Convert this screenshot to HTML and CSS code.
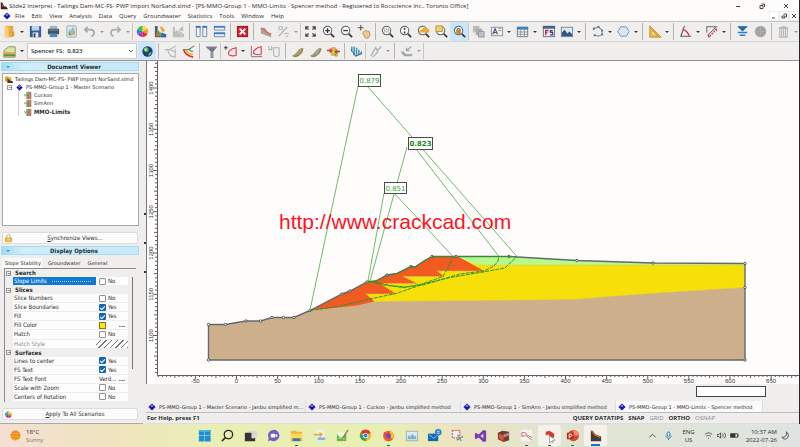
FILE: index.html
```html
<!DOCTYPE html>
<html lang="en">
<head>
<meta charset="utf-8">
<title>Slide2 Interpret</title>
<link rel="stylesheet" href="styles.css">
</head>
<body>
<svg class="sprite" aria-hidden="true">
  <defs>
    <symbol id="diamond" viewBox="0 0 10 10"><path d="M5 .5 9.5 5 5 9.5.5 5z" fill="#1b17b8"/><path d="M5 1.5 7 4 5 5 3 4z" fill="#7d86f5"/></symbol>
    <symbol id="app" viewBox="0 0 10 10"><path d="M1 0v9h9L8 6 5 5 3 1z" fill="#2c2522"/><path d="M2 1 4 5l4 2-5-1z" fill="#e2603a"/></symbol>
    <symbol id="folder" viewBox="0 0 16 16"><path d="M3 2h9v12H3z" fill="#e6ad45"/><path d="M3 2 7 4v11l-4-1z" fill="#f7cf79"/><path d="M11 8h2v5h-2z" fill="#d89a32"/></symbol>
    <symbol id="save" viewBox="0 0 16 16"><path d="M2 2h11l1 1v11H2z" fill="#3b5a94"/><path d="M4 2h8v5H4z" fill="#b9d3ee"/><path d="M5 9h6v5H5z" fill="#e9eef6"/><path d="M6 10h2v4H6z" fill="#2a3d66"/></symbol>
    <symbol id="print" viewBox="0 0 16 16"><path d="M4 2h8v4H4z" fill="#8fb9d9"/><rect x="2" y="5" width="12" height="6" rx="1" fill="#4a535c"/><path d="M4 10h8v4H4z" fill="#3f8fc5"/><path d="M3 6h10v1H3z" fill="#8a949c"/></symbol>
    <symbol id="copy" viewBox="0 0 16 16"><rect x="3" y="2" width="10" height="12" rx="1" fill="#dcecf2" stroke="#9ba7aa"/><path d="M5 12V6h3v-2h3v8z" fill="#8fc0cf"/><circle cx="10" cy="9" r="2" fill="#e0a060"/><path d="M5 8l3 4H5z" fill="#5ba352"/></symbol>
    <symbol id="undo" viewBox="0 0 16 16"><path d="M6 3 3 6l3 3M3 6h6c5 0 5 6 1 7" fill="none" stroke="#a4a6a6" stroke-width="1.7"/></symbol>
    <symbol id="redo" viewBox="0 0 16 16"><path d="M10 3l3 3-3 3M13 6H7c-5 0-5 6-1 7" fill="none" stroke="#aaacac" stroke-width="1.7"/></symbol>
    <symbol id="wheel" viewBox="0 0 16 16"><path d="M8 8V2a6 6 0 0 1 5.2 3z" fill="#f2e235"/><path d="M8 8l5.2-3a6 6 0 0 1 0 6z" fill="#f39a21"/><path d="M8 8l5.2 3A6 6 0 0 1 8 14z" fill="#e3262b"/><path d="M8 8v6a6 6 0 0 1-5.2-3z" fill="#b32ec4"/><path d="M8 8l-5.2 3a6 6 0 0 1 0-6z" fill="#2a7de8"/><path d="M8 8 2.800 5A6 6 0 0 1 8 2z" fill="#36c451"/></symbol>
    <symbol id="contour" viewBox="0 0 16 16"><path d="M2 2h3v8l9 1v3H2z" fill="#54616a"/><path d="M5 6l3 3 4 4H5z" fill="#55ad55"/><path d="M7 3h3l3 4-3 2z" fill="#e5b13b"/><path d="M9 9l5 2v3H9z" fill="#2f69ba"/><path d="M3 10h4v3H3z" fill="#d66d37"/></symbol>
    <symbol id="contourOff" viewBox="0 0 16 16"><path d="M2 14V3h2v5l4-1 6 4v3zM8 6l5-4v6z" fill="#bcbdbd"/><path d="M5 6l8 7" stroke="#dadada"/></symbol>
    <symbol id="cols" viewBox="0 0 16 16"><path d="M2.500 2.500h4v11h-4zM9.500 2.500h4v11h-4z" fill="#eef4fb" stroke="#7189a8"/><path d="M2 2h5v2H2zM9 2h5v2H9z" fill="#3c6fb6"/></symbol>
    <symbol id="rows" viewBox="0 0 16 16"><path d="M2.500 2.500h11v4h-11zM2.500 9.500h11v4h-11z" fill="#eef4fb" stroke="#7189a8"/><path d="M2 2h12v2H2zM2 9h12v2H2z" fill="#3c7fd0"/></symbol>
    <symbol id="close" viewBox="0 0 16 16"><rect x="2.500" y="2.500" width="11" height="11" fill="#d6202c" stroke="#8e1820"/><path d="M5 5l6 6M11 5l-6 6" stroke="#fff" stroke-width="2"/></symbol>
    <symbol id="slope" viewBox="0 0 16 16"><path d="M3 4h4l3 4 4 2v4L3 10z" fill="#aaa49d"/><path d="M3 5c5-1 4 5 11 6" fill="none" stroke="#dd6a55" stroke-width="1.500"/></symbol>
    <symbol id="percent" viewBox="0 0 16 16"><path d="M3 13 12 3" stroke="#aaa" stroke-width="1.200"/><path d="M3 3h4v3H3zM9 10h5M10 13h3" fill="none" stroke="#b0b0b0"/></symbol>
    <symbol id="extents" viewBox="0 0 16 16"><path d="M3 6V3h3M3 3l3 3M10 3h3v3M13 3l-3 3M3 10v3h3M3 13l3-3M13 10v3h-3M13 13l-3-3" fill="none" stroke="#444" stroke-width="1.300"/></symbol>
    <symbol id="zoom" viewBox="0 0 16 16"><circle cx="7" cy="7" r="4.500" fill="#f6f8f8" stroke="#5d6163" stroke-width="1.100"/><path d="M10.500 10.500 14 14" stroke="#3d3d3d" stroke-width="2"/></symbol>
    <symbol id="zoomIn" viewBox="0 0 16 16"><use href="#zoom"/><path d="M4.500 7h5M7 4.500v5" stroke="#333" stroke-width="1.300"/></symbol>
    <symbol id="zoomOut" viewBox="0 0 16 16"><use href="#zoom"/><path d="M4.500 7h5" stroke="#333" stroke-width="1.300"/></symbol>
    <symbol id="zoomWin" viewBox="0 0 16 16"><use href="#zoom"/><path d="M4.500 5.500h5v3h-5z" fill="#d8e2d8" stroke="#999" stroke-dasharray="1 1"/></symbol>
    <symbol id="zoomFit" viewBox="0 0 16 16"><use href="#zoom"/><path d="M7 4v2M7 8v2" stroke="#333" stroke-width="1.600"/></symbol>
    <symbol id="zoomSoil" viewBox="0 0 16 16"><use href="#zoom"/><path d="M2 9 8 4l6 1v4z" fill="#e5ae2c"/></symbol>
    <symbol id="zoomSel" viewBox="0 0 16 16"><use href="#zoom"/><path d="M2 2h7v6H2z" fill="#ecd267" stroke="#b49a42"/></symbol>
    <symbol id="zoomLock" viewBox="0 0 16 16"><use href="#zoom"/><path d="M4.500 6.500h5v4h-5z" fill="#c58b21"/><path d="M5.500 7V5h3v2" fill="none" stroke="#555"/></symbol>
    <symbol id="pan" viewBox="0 0 16 16"><path d="M4 1v6M1 4h6" stroke="#555" stroke-width="1.200"/><path d="M7 8l2-1 4 1 1 4-2 3H9L6 10z" fill="#ecc78e" stroke="#b9935c"/></symbol>
    <symbol id="copies" viewBox="0 0 16 16"><path d="M2 2h7v7H2z" fill="#bcbcbc"/><path d="M5 5h7v7H5z" fill="#adadad"/><path d="M8 8h6v6H8z" fill="#bfbfbf" stroke="#999"/></symbol>
    <symbol id="textbox" viewBox="0 0 16 16"><rect x="2.500" y="3.500" width="12" height="9" fill="#eee" stroke="#929292"/><path d="M4 11 6.500 5 9 11M5 9h3" fill="none" stroke="#3c5884" stroke-width="1.200"/><path d="M10 5h3M10 7h3" stroke="#999"/></symbol>
    <symbol id="table" viewBox="0 0 16 16"><path d="M2.500 3.500h11v10h-11z" fill="#f5f7f9" stroke="#6f7c88"/><path d="M2 3h12v3H2z" fill="#3e83b8"/><path d="M2 8.500h12M2 11h12M6 6v8M10 6v8" stroke="#8c959c"/></symbol>
    <symbol id="fs" viewBox="0 0 16 16"><rect x="2.500" y="2.500" width="12" height="11" fill="#f2f0f4" stroke="#67718c"/><path d="M2 2h13v3H2z" fill="#49608d"/><path d="M5 12V7h3M5 9h2" fill="none" stroke="#c33547" stroke-width="1.500"/><path d="M12.500 7H10v2h2.500v2.500H9.500" fill="none" stroke="#3b3e8c" stroke-width="1.300"/></symbol>
    <symbol id="image" viewBox="0 0 16 16"><rect x="2.500" y="3.500" width="12" height="10" fill="#dbe9f4" stroke="#7b8790"/><path d="M3 13V9l3-3 3 4 2-2 3 3v2z" fill="#36547d"/></symbol>
    <symbol id="polyline" viewBox="0 0 16 16"><path d="M4 5 9 3l4 4v4l-4 2-4-1" fill="none" stroke="#8299ac" stroke-width="1.300"/><path d="M3 4h2v2H3zM8 2h2v2H8zM12 6h2v2h-2zM12 10h2v2h-2zM4 11h2v2H4z" fill="#5f7484"/></symbol>
    <symbol id="hex" viewBox="0 0 16 16"><path d="M5 3h6l3 5-3 5H5L2 8z" fill="#d3e9f3" stroke="#7c97a6"/></symbol>
    <symbol id="square" viewBox="0 0 16 16"><path d="M3 2v12h12z" fill="#edb93f" stroke="#bf922e"/><path d="M6 8v3h3z" fill="#f3f3f3"/><path d="M5 6l7 7" stroke="#80673b" stroke-dasharray="1 1"/></symbol>
    <symbol id="angle" viewBox="0 0 16 16"><path d="M7 2 3 13h11" fill="none" stroke="#5d5d5d" stroke-width="1.200"/><path d="M5 6c4 1 6 3 7 7" fill="none" stroke="#d9293c" stroke-width="1.400"/></symbol>
    <symbol id="dimension" viewBox="0 0 16 16"><path d="M3 9V3h10L4 12" fill="none" stroke="#6a6a6a" stroke-width="1.100"/><path d="M6 13 13 6" stroke="#d93544" stroke-width="1.400" stroke-dasharray="2 1"/><path d="M4 11v3h3zM11 5h3v3z" fill="#df3543"/></symbol>
    <symbol id="water" viewBox="0 0 16 16"><path d="M3 3h10L8 8z" fill="#27609c"/><path d="M3 3h10M3 9h10M5 12h6" stroke="#2e7dc5" stroke-width="1.500"/></symbol>
    <symbol id="disc" viewBox="0 0 16 16"><circle cx="8" cy="8" r="6" fill="#a2a2a2"/><path d="M8 2v12M2 8h12" stroke="#adadad"/></symbol>
    <symbol id="trash" viewBox="0 0 16 16"><path d="M3 4h10M6 3h4M4 5h8v9H4zM6 6v7M8 6v7M10 6v7" fill="none" stroke="#b5b5b5" stroke-width="1.100"/></symbol>
    <symbol id="section" viewBox="0 0 16 16"><path d="M2 7 7 3h7v11H2z" fill="#dce5a8" stroke="#8a8f65"/><path d="M2 9c5-3 7 2 12-1v5H2z" fill="#dfa94e"/><path d="M2 12h12" stroke="#4f984f" stroke-width="2"/></symbol>
    <symbol id="globe" viewBox="0 0 16 16"><circle cx="8" cy="8" r="5.500" fill="#1c3f76"/><path d="M4 5c3-3 6-1 5 2s-5 2-5-2zM9 10l3-2v3l-3 2z" fill="#5db85c"/><circle cx="6" cy="6" r="1.500" fill="#a7df9d"/></symbol>
    <symbol id="surfOff" viewBox="0 0 16 16"><path d="M2 6h5l7-4M13 5v9c-4 0-7-3-8-8M13 8c-2 0-4-1-5-2" fill="none" stroke="#b4b6b6" stroke-width="1.200"/></symbol>
    <symbol id="surf" viewBox="0 0 16 16"><path d="M2 6h6l6-4" fill="none" stroke="#777" stroke-width="1.200"/><path d="M3 6c1 5 5 7 10 8" fill="none" stroke="#d83d35" stroke-width="1.800"/><path d="M5 6c1 4 5 5 8 5" fill="none" stroke="#eab82c" stroke-width="1.800"/><path d="M8 5c1 2 3 3 5 3" fill="none" stroke="#53a955" stroke-width="1.300"/></symbol>
    <symbol id="funnel" viewBox="0 0 16 16"><path d="M2 3h12l-4 5v7H7V8z" fill="#697883"/><path d="M2 3h12l-2 2H4z" fill="#8d759b"/><path d="M8 8h1v6H8z" fill="#b8c3ca"/></symbol>
    <symbol id="addSurf" viewBox="0 0 16 16"><path d="M1 4h4M3 2v4" stroke="#333"/><path d="M14 4C8 5 5 8 6 11c2 2 5 2 8 1z" fill="#fae9e9" stroke="#cf4153" stroke-width="1.200"/></symbol>
    <symbol id="axisSurf" viewBox="0 0 16 16"><path d="M2.500 2v11.500H14" fill="none" stroke="#777"/><path d="M13 3C7 4 4 8 5 10c2 1 5 2 8 1z" fill="#fbeaea" stroke="#d54256" stroke-width="1.200"/></symbol>
    <symbol id="listSurf" viewBox="0 0 16 16"><path d="M2 2v4h3V2M7 4h6v8c-3 3-6 1-6-2z" fill="none" stroke="#b0b0b0" stroke-width="1.100"/></symbol>
    <symbol id="slice" viewBox="0 0 16 16"><path d="M2 12c5 0 6-7 11-8l1 1c0 5-4 8-8 9z" fill="#b09c68"/><path d="M3 13c6 1 9-3 11-8" fill="none" stroke="#77755a"/></symbol>
    <symbol id="sliceQ" viewBox="0 0 16 16"><use href="#slice"/><path d="M9 7l3-1-1 4-3 2z" fill="#7fb4c4"/></symbol>
    <symbol id="forces" viewBox="0 0 16 16"><path d="M6 4h4v8H6zM10 9h2v4h-2z" fill="#d9ca34" stroke="#9c9433" stroke-width=".7"/><path d="M1 7h5M10 8h5" stroke="#d32d3b" stroke-width="1.500"/><path d="M4 4l3 3-3 3zM12 5l-3 3 3 3z" fill="#d93843"/></symbol>
    <symbol id="bars" viewBox="0 0 16 16"><path d="M3 3v5M5.500 3v9M8 4v9M10.500 6v6M13 8v3" stroke="#3e91b8" stroke-width="1.600"/><path d="M2 6l5 7 7-3" fill="none" stroke="#29618c"/></symbol>
    <symbol id="pen" viewBox="0 0 16 16"><path d="M3 13 8 4l2 3 4-4M5 14l6-6M7 5h3" fill="none" stroke="#b2b2b2" stroke-width="1.500"/></symbol>
    <symbol id="ground" viewBox="0 0 16 16"><path d="M2 8h3c2 4 6 3 9 2v3H6C4 12 3 10 2 8z" fill="#a5a5a5"/><path d="M13 3 8 7M8 4v3h3" fill="none" stroke="#a5a5a5" stroke-width="1.400"/></symbol>
    <symbol id="lock" viewBox="0 0 10 10"><path d="M3 5V3c0-3 4-3 4 0v2" fill="none" stroke="#b69a63"/><rect x="1" y="4" width="8" height="5" fill="#e6ae3b"/><path d="M3 6h4v1H3z" fill="#fff1bf"/></symbol>
    <symbol id="tabs" viewBox="0 0 10 10"><path d="M0 2h4l1 1h3v5H0z" fill="#d7a633"/><path d="M3 4l3 3 4 1v2H3z" fill="#4d3427"/></symbol>
    <symbol id="result" viewBox="0 0 10 10"><path d="M3 1h6v9H3z" fill="#9f8072"/><path d="M6 3h3v6H6z" fill="#cc7958"/><path d="M0 4l2 2 4-5" fill="none" stroke="#69c26d" stroke-width="1.400"/></symbol>
  </defs>
</svg>

<div class="app">
  <header class="titlebar">
    <svg class="app-icon"><use href="#app"/></svg>
    <h1>Slide2 Interpret - Tailings Dam-MC-FS- PWP Import NorSand.slmd - [PS-MMO-Group 1 - MMO-Limits - Spencer method - Registered to Rocscience Inc., Toronto Office]</h1>
    <div class="win-controls">
      <button aria-label="Minimize"><svg viewBox="0 0 8 8"><path d="M2 4.500h4"/></svg></button>
      <button aria-label="Restore"><svg viewBox="0 0 8 8"><path d="M2 3.500h3v3H2zM3.500 2h3v3"/></svg></button>
      <button aria-label="Close"><svg viewBox="0 0 8 8"><path d="M2 2l4 4M6 2 2 6"/></svg></button>
    </div>
  </header>

  <nav class="menubar">
    <svg class="menu-icon"><use href="#diamond"/></svg>
    <button>File</button><button>Edit</button><button>View</button><button>Analysis</button><button>Data</button><button>Query</button><button>Groundwater</button><button>Statistics</button><button>Tools</button><button>Window</button><button>Help</button>
    <div class="doc-controls">
      <button aria-label="Minimize document"><svg viewBox="0 0 8 8"><path d="M2 6h3"/></svg></button>
      <button aria-label="Restore document"><svg viewBox="0 0 8 8"><path d="M2 4h3v2H2zM3.500 2h3v3"/></svg></button>
      <button aria-label="Close document"><svg viewBox="0 0 8 8"><path d="M2 2l4 4M6 2 2 6"/></svg></button>
    </div>
  </nav>

  <div class="toolbar">
    <button class="tool" aria-label="Open"><svg><use href="#folder"/></svg></button><button class="drop" aria-label="Recent"></button>
    <button class="tool" aria-label="Save"><svg><use href="#save"/></svg></button>
    <button class="tool" aria-label="Print"><svg><use href="#print"/></svg></button>
    <button class="tool" aria-label="Copy"><svg><use href="#copy"/></svg></button>
    <button class="tool" aria-label="Undo"><svg><use href="#undo"/></svg></button><button class="drop off" aria-label="Undo list"></button>
    <button class="tool" aria-label="Redo"><svg><use href="#redo"/></svg></button><button class="drop off" aria-label="Redo list"></button>
    <span class="sep tight"></span>
    <button class="tool" aria-label="Display options"><svg><use href="#wheel"/></svg></button>
    <button class="tool" aria-label="Contours"><svg><use href="#contour"/></svg></button>
    <button class="tool" aria-label="Contours off"><svg><use href="#contourOff"/></svg></button>
    <span class="sep"></span>
    <button class="tool" aria-label="Tile vertically"><svg><use href="#cols"/></svg></button>
    <button class="tool" aria-label="Tile horizontally"><svg><use href="#rows"/></svg></button>
    <span class="sep"></span>
    <button class="tool" aria-label="Close view"><svg><use href="#close"/></svg></button>
    <span class="sep"></span>
    <button class="tool" aria-label="Slope"><svg><use href="#slope"/></svg></button>
    <button class="tool" aria-label="Percent"><svg><use href="#percent"/></svg></button><button class="drop off" aria-label="Percent list"></button>
    <span class="sep tight"></span>
    <button class="tool" aria-label="Zoom all"><svg><use href="#extents"/></svg></button>
    <button class="tool" aria-label="Zoom in"><svg><use href="#zoomIn"/></svg></button>
    <button class="tool" aria-label="Zoom out"><svg><use href="#zoomOut"/></svg></button>
    <button class="tool" aria-label="Pan"><svg><use href="#pan"/></svg></button>
    <span class="sep"></span>
    <button class="tool" aria-label="Zoom window"><svg><use href="#zoomWin"/></svg></button>
    <button class="tool" aria-label="Zoom fit"><svg><use href="#zoomFit"/></svg></button>
    <button class="tool" aria-label="Zoom slope"><svg><use href="#zoomSoil"/></svg></button>
    <button class="tool" aria-label="Zoom selection"><svg><use href="#zoomSel"/></svg></button>
    <button class="tool on" aria-label="Lock zoom"><svg><use href="#zoomLock"/></svg></button>
    <span class="sep tight"></span>
    <button class="tool" aria-label="Copy format"><svg><use href="#copies"/></svg></button>
    <button class="tool" aria-label="Text box"><svg><use href="#textbox"/></svg></button><button class="drop" aria-label="Text list"></button>
    <button class="tool" aria-label="Table"><svg><use href="#table"/></svg></button><button class="drop" aria-label="Table list"></button>
    <button class="tool" aria-label="Safety factor"><svg><use href="#fs"/></svg></button>
    <button class="tool" aria-label="Image"><svg><use href="#image"/></svg></button><button class="drop" aria-label="Image list"></button>
    <span class="sep"></span>
    <button class="tool" aria-label="Polyline"><svg><use href="#polyline"/></svg></button><button class="drop" aria-label="Line list"></button>
    <button class="tool" aria-label="Polygon"><svg><use href="#hex"/></svg></button><button class="drop" aria-label="Polygon list"></button>
    <span class="sep"></span>
    <button class="tool" aria-label="Measure"><svg><use href="#square"/></svg></button><button class="drop" aria-label="Measure list"></button>
    <span class="sep"></span>
    <button class="tool" aria-label="Angle"><svg><use href="#angle"/></svg></button><button class="drop" aria-label="Angle list"></button>
    <button class="tool" aria-label="Dimension"><svg><use href="#dimension"/></svg></button><button class="drop" aria-label="Dimension list"></button>
    <span class="sep"></span>
    <button class="tool" aria-label="Water table"><svg><use href="#water"/></svg></button>
    <button class="tool" aria-label="Grid"><svg><use href="#disc"/></svg></button>
    <span class="sep"></span>
    <button class="tool" aria-label="Delete"><svg><use href="#trash"/></svg></button><button class="drop off" aria-label="Delete list"></button>
  </div>

  <div class="toolbar second">
    <button class="tool" aria-label="Model"><svg><use href="#section"/></svg></button><button class="drop" aria-label="Model list"></button>
    <select class="method" aria-label="Analysis method"><option>Spencer FS:&nbsp; 0.823</option></select>
    <button class="tool on" aria-label="Global minimum"><svg><use href="#globe"/></svg></button>
    <span class="sep"></span>
    <button class="tool" aria-label="Minimum surfaces"><svg><use href="#surfOff"/></svg></button>
    <button class="tool" aria-label="All surfaces"><svg><use href="#surf"/></svg></button>
    <span class="sep"></span>
    <button class="tool" aria-label="Filter"><svg><use href="#funnel"/></svg></button>
    <span class="sep tight"></span>
    <button class="tool" aria-label="Add query"><svg><use href="#addSurf"/></svg></button><button class="drop" aria-label="Query list"></button>
    <button class="tool" aria-label="Graph query"><svg><use href="#axisSurf"/></svg></button>
    <button class="tool" aria-label="Delete query"><svg><use href="#listSurf"/></svg></button>
    <span class="sep"></span>
    <button class="tool" aria-label="Show slices"><svg><use href="#slice"/></svg></button>
    <button class="tool" aria-label="Query slices"><svg><use href="#sliceQ"/></svg></button>
    <button class="tool" aria-label="Forces"><svg><use href="#forces"/></svg></button>
    <span class="sep"></span>
    <button class="tool" aria-label="Pressure bars"><svg><use href="#bars"/></svg></button>
    <span class="sep tight"></span>
    <button class="tool" aria-label="Support"><svg><use href="#pen"/></svg></button><button class="drop off" aria-label="Support list"></button>
    <span class="sep"></span>
    <button class="tool" aria-label="Ground"><svg><use href="#ground"/></svg></button><button class="drop off" aria-label="Ground list"></button>
    <span class="sep tight"></span>
  </div>

  <div class="body">
    <aside class="side">
      <h2>Document Viewer</h2>
      <div class="tree">
        <div><svg><use href="#tabs"/></svg>Tailings Dam-MC-FS- PWP Import NorSand.slmd</div>
        <div class="group"><i class="box">−</i><svg><use href="#diamond"/></svg>PS-MMO-Group 1 - Master Scenario</div>
        <div class="leaf"><svg><use href="#result"/></svg>Cuckoo</div>
        <div class="leaf"><svg><use href="#result"/></svg>SimAnn</div>
        <div class="leaf current"><svg><use href="#result"/></svg>MMO-Limits</div>
      </div>
      <button class="wide sync"><svg><use href="#lock"/></svg><span><u>S</u>ynchronize Views...</span></button>
      <h2>Display Options</h2>
      <div class="opt-tabs"><button class="active">Slope Stability</button><button>Groundwater</button><button>General</button></div>
      <div class="props">
        <div class="prop-list">
          <div class="cat"><i class="box">−</i>Search</div>
          <div class="prop selected"><label for="p1">Slope Limits</label><span><input type="checkbox" id="p1">No</span></div>
          <div class="cat"><i class="box">−</i>Slices</div>
          <div class="prop"><label for="p2">Slice Numbers</label><span><input type="checkbox" id="p2">No</span></div>
          <div class="prop"><label for="p3">Slice Boundaries</label><span><input type="checkbox" id="p3" checked>Yes</span></div>
          <div class="prop"><label for="p4">Fill</label><span><input type="checkbox" id="p4" checked>Yes</span></div>
          <div class="prop"><label for="p5">Fill Color</label><span><button class="swatch" id="p5" aria-label="Fill Color"></button><b>...</b></span></div>
          <div class="prop"><label for="p6">Hatch</label><span><input type="checkbox" id="p6">No</span></div>
          <div class="prop dim"><label>Hatch Style</label><span class="hatch"></span></div>
          <div class="cat"><i class="box">−</i>Surfaces</div>
          <div class="prop"><label for="p7">Lines to center</label><span><input type="checkbox" id="p7" checked>Yes</span></div>
          <div class="prop"><label for="p8">FS Text</label><span><input type="checkbox" id="p8" checked>Yes</span></div>
          <div class="prop"><label>FS Text Font</label><span>Verd...<b>...</b></span></div>
          <div class="prop"><label for="p9">Scale with Zoom</label><span><input type="checkbox" id="p9">No</span></div>
          <div class="prop"><label for="p10">Centers of Rotation</label><span><input type="checkbox" id="p10">No</span></div>
        </div>
        <div class="scroll"><i></i></div>
      </div>
      <button class="wide apply"><svg><use href="#wheel"/></svg><span><u>A</u>pply To All Scenarios</span></button>
    </aside>
    <div class="splitter"><i></i><i></i><i></i></div>

    <main class="view">
      <svg class="plot" viewBox="147 61 652 323" role="img" aria-label="Slope section">
        <path fill="#cdb08b" d="M208.500 324.500H225.500L246 321H260.500L272 317.500H294L310 310.500 345 295 374 298 745 285V360H208.500z"/>
        <path fill="#f7df09" d="M366 283 400 272 458 257 478 265H745V287.500L650 293.500 573 299.500 490 300.500 374 301.500 365 299z"/>
        <path fill="#b7fb8f" d="M456 256.500H509L577 260.500 653 263 745 263.500V265H478z"/>
        <path fill="#f15b22" d="M310 310.500 342 294 350 291 367 282 376 281 387 275 397 273.500 411 266.500 415 267 424 261 432 256.500H458L484 271H437L444 276.500H403L417 283.500H380L396 294H366L374.500 301.500 357 305.500z"/>
        <g class="dots">
          <path d="M374 301.500 490 300.500 573 299.500 650 293.500 745 287.500M403 276.500H443M437 271H484M380 283.500H417M366 294H396M478 265H745"/>
        </g>
        <path class="outline" d="M208.500 324.500H225.500L246 321H260.500L272 317.500H294L310 310.500 342 294 350 291 367 282 376 281 387 275 397 273.500 411 266.500 415 267 424 261 432 256.500H509L577 260.500 653 263 745 263.500V360H208.500z"/>
        <g id="nodes"></g>
        <g class="rays">
          <path d="M358 86 310 310M368 87 517 256.500M407 147 370 281M416 149 499 256.500M384 193 368 281M395 194 453 256.500"/>
        </g>
        <g class="slips">
          <path d="M310 310.500 324 308.500 340 306 370 299 396 293.500 425 283.500 450 277.500 483 272 505 268 517 256.500"/>
          <path d="M368 281 384 285 403 287.500 423 285 440 280 460 274 484 271 494 266 498 261 499 256.500"/>
          <path d="M370 281 390 285.500 406 287 422 284 443 276.500 449 266 453 256.500"/>
          <path d="M368 282 376 281 387 275 397 273.500 411 266.500 415 267 424 261 432 256.500H517"/>
        </g>
        <g class="labels">
          <rect x="358.500" y="74.500" width="22" height="12"/><text x="369.500" y="83">0.879</text>
          <rect x="408.500" y="137.500" width="24" height="12"/><text class="min" x="420.500" y="146">0.823</text>
          <rect x="384.500" y="182.500" width="22" height="11"/><text x="395.500" y="191">0.851</text>
        </g>
        <text class="mark" x="279" y="229">http://www.crackcad.com</text>
        <g id="ruler"></g>
      </svg>
      <div class="strip"><span></span></div>
      <div class="view-tabs">
        <button><svg><use href="#diamond"/></svg><span>PS-MMO-Group 1 - Master Scenario - Janbu simplified m...</span></button>
        <button><svg><use href="#diamond"/></svg><span>PS-MMO-Group 1 - Cuckoo - Janbu simplified method</span></button>
        <button><svg><use href="#diamond"/></svg><span>PS-MMO-Group 1 - SimAnn - Janbu simplified method</span></button>
        <button class="active"><svg><use href="#diamond"/></svg><span>PS-MMO-Group 1 - MMO-Limits - Spencer method</span></button>
      </div>
      <footer class="status">
        <b>For Help, press F1</b>
        <span class="modes"><b>QUERY DATATIPS</b><b>SNAP</b><span>GRID</span><b>ORTHO</b><span>OSNAP</span></span>
      </footer>
    </main>
  </div>
</div>

<div class="taskbar">
  <div class="weather">
    <svg viewBox="0 0 12 12"><circle cx="6" cy="6" r="5.500" fill="#f08a1c"/><path d="M1 4h9M1 7h10M3 10h6" stroke="#f7b63c"/></svg>
    <div><span>18°C</span><span class="muted">Sunny</span></div>
  </div>
  <div class="apps">
    <button aria-label="Start"><svg viewBox="0 0 16 16"><path d="M2 2h6v6H2zM8.500 2h6v6h-6zM2 8.500h6v6H2zM8.500 8.500h6v6h-6z" fill="#1b8fd6"/><path d="M2 2h6v2H2zM8.500 2h6v2h-6z" fill="#45b7ec"/></svg></button>
    <button aria-label="Search"><svg viewBox="0 0 16 16"><circle cx="9" cy="7" r="4.500" fill="none" stroke="#29292b" stroke-width="1.400"/><path d="M6 10l-4 4" stroke="#29292b" stroke-width="1.600"/></svg></button>
    <button aria-label="Task view"><svg viewBox="0 0 16 16"><path d="M6 3h9v8H6z" fill="#d7d7d7"/><path d="M2 5h7v6h4v3H2z" fill="#333"/></svg></button>
    <button aria-label="Chat"><svg viewBox="0 0 16 16"><path d="M8 2a6 6 0 1 1-3 11l-3 1 1-3A6 6 0 0 1 8 2z" fill="#6b5fc4"/><rect x="5" y="6" width="5" height="4" rx="1" fill="#fff"/><path d="M10 8l2-2v4z" fill="#fff"/></svg></button>
    <button class="open" aria-label="Files"><svg viewBox="0 0 16 16"><path d="M2 3h5l1 1h6v10H2z" fill="#eeb92e"/><path d="M2 6h12v5H2z" fill="#ffd85e"/><path d="M4 11h8v3H4z" fill="#3278b8"/></svg></button>
    <button aria-label="Transfer"><svg viewBox="0 0 16 16"><path d="M5 2h8v12H5z" fill="#eaf4fb"/><path d="M2 6h6V4l4 3-4 3V8H2z" fill="#edaa38"/><path d="M6 10h8v3H6z" fill="#84b8e2"/></svg></button>
    <button aria-label="Editor"><svg viewBox="0 0 16 16"><path d="M2 6h10v8H2z" fill="#65b846"/><path d="M2 5h9l-2 4-3 1-3-2z" fill="#f1f7e8"/><path d="M4 11l3-1 3 2" fill="none" stroke="#dff0cf"/><path d="M14 2 8 11" stroke="#9a7a3e" stroke-width="1.500"/></svg></button>
    <button aria-label="Chrome"><svg viewBox="0 0 16 16"><circle cx="8" cy="8" r="6" fill="#e6bd2c"/><path d="M8 8 2.800 5A6 6 0 0 1 13.500 5z" fill="#db3b2f"/><path d="M2.800 5A6 6 0 0 0 8 14l2-5-3 1z" fill="#35a15a"/><circle cx="8" cy="8" r="2.800" fill="#fff"/><circle cx="8" cy="8" r="2.100" fill="#3c80e0"/></svg></button>
    <button class="open" aria-label="Firefox"><svg viewBox="0 0 16 16"><circle cx="8" cy="8.500" r="5.700" fill="#ec5b2c"/><path d="M9 2c4 2 6 5 4 9-2 1-4-1-3-4z" fill="#f9bd38"/><circle cx="8" cy="8.500" r="2.600" fill="#7142b4"/><path d="M3 4l3 2-3 3z" fill="#e73c66"/></svg></button>
    <button aria-label="Monitor"><svg viewBox="0 0 16 16"><rect x="2.500" y="3.500" width="12" height="10" fill="#d9edf3" stroke="#9fb0b8"/><path d="M4 12V9l2-2v3l3-4 2 3 2-1v4z" fill="#85aec8"/></svg></button>
    <button aria-label="Mail"><svg viewBox="0 0 16 16"><path d="M1 6h11v8H1z" fill="#1769b4"/><path d="M2 7l5 4 5-4" stroke="#8ac7ee" fill="none"/><circle cx="12" cy="4.500" r="3.500" fill="#2480c4"/><path d="M10.500 3.500h3M10.500 5.500h3" stroke="#d3ebf9"/></svg></button>
    <button aria-label="Snip"><svg viewBox="0 0 16 16"><rect x="2.500" y="2.500" width="8" height="8" fill="#f6efef" stroke="#ba4551" stroke-dasharray="2 1"/><path d="M8 7l4 7M14 9 7 13" stroke="#7793a4" stroke-width="1.400"/></svg></button>
    <button aria-label="Studio"><svg viewBox="0 0 16 16"><path d="M11 2l3 1v11l-3 1-5-5-3 2-1-1V6l1-1 3 2zM11 6 8 8.500 11 11z" fill="#7b3db2" fill-rule="evenodd"/></svg></button>
    <button aria-label="Modeler"><svg viewBox="0 0 16 16"><path d="M2 5l5-2 7 1v9l-6 2-6-3z" fill="#703c32"/><path d="M3 6l5 2v6l-5-3z" fill="#e0542f"/><path d="M8 7l6-2v3l-6 2z" fill="#ba8980"/></svg></button>
    <button class="open" aria-label="Slide"><svg viewBox="0 0 16 16"><path d="M2 2h12v12H2z" fill="#f5f2f0"/><path d="M3 5h4l2 3 5 2M3 5v4l4-1 7 5" fill="none" stroke="#bd746c"/></svg></button>
    <button class="open lit" aria-label="Model"><svg viewBox="0 0 16 16"><path d="M4 4l4-1 5 3v4H9L7 7 4 8z" fill="#cb3d37"/><path d="M8 8l6 5-3 .5 1 2-1 .5-1-2-2 2z" fill="#fff" stroke="#666" stroke-width=".6"/></svg></button>
    <button class="open" aria-label="PowerPoint"><svg viewBox="0 0 16 16"><circle cx="9" cy="8" r="6" fill="#d8492f"/><path d="M9 2a6 6 0 0 1 6 6H9z" fill="#f38d6a"/><rect x="2" y="5" width="7" height="7" fill="#b22d20"/><path d="M4.500 11V6.500h1.500a1.200 1.200 0 0 1 0 2.500H4.500" fill="none" stroke="#fff"/></svg></button>
    <button class="open lit front" aria-label="Interpret"><svg viewBox="0 0 16 16"><path d="M3 3v11h11V9L8 7 5 3z" fill="#443c38"/><path d="M3 3l4 5 6 3v-2L8 7 5 3z" fill="#e0622c"/></svg></button>
  </div>
  <div class="tray">
    <svg viewBox="0 0 10 10"><path d="M1.500 7 5 3.500 8.500 7"/></svg>
    <svg class="mic" viewBox="0 0 10 10"><rect x="3.500" y="1" width="3" height="5" rx="1.500"/><path d="M2 5c0 4 6 4 6 0M5 8v2"/></svg>
    <div class="lang"><span>ENG</span><span>US</span></div>
    <svg viewBox="0 0 10 10"><path d="M1 4c2-2.500 6-2.500 8 0M2.500 6c1.500-1.500 3.500-1.500 5 0M5 7.500v1"/></svg>
    <svg viewBox="0 0 10 10"><path d="M0 4h2l2-2v6L2 6H0zM6 3c1 1 1 3 0 4M8 2c2 2 2 4 0 6"/></svg>
    <svg viewBox="0 0 10 10"><path d="M.5 3h8v4h-8z"/><path class="solid" d="M1 3h5v4H1zM8.500 4h1v2h-1z"/></svg>
    <div class="clock"><span>10:37 AM</span><span>2022-07-26</span></div>
    <svg viewBox="0 0 10 10"><path d="M6 1c3 2 3 7-1 8-2 0-3-1-4-2 4 0 6-2 5-6z"/></svg>
  </div>
</div>
<script src="plot.js"></script>
</body>
</html>
```

FILE: styles.css
```css
* { box-sizing: border-box; }

body {
  margin: 0;
  height: 100vh;
  display: flex;
  flex-direction: column;
  overflow: hidden;
  background: #efeeed;
  color: #2b2b2b;
  font: 6px/8px "Open Sans", "Liberation Sans", sans-serif;
}

button, select, input {
  margin: 0;
  padding: 0;
  border: 0;
  background: none;
  color: inherit;
  font: inherit;
}

svg { display: block; flex: none; }
.sprite { position: absolute; width: 0; height: 0; }

.app {
  flex: 1;
  min-height: 0;
  display: flex;
  flex-direction: column;
  border-right: 1px solid #24262c;
}

/* Title and menu */
.titlebar, .menubar { display: flex; align-items: center; background: #fdfcfb; }
.titlebar { height: 11px; }
.app-icon { width: 8px; height: 8px; }
.titlebar h1 { margin: 0 0 0 1px; font-size: 6px; font-weight: 400; white-space: nowrap; }
.win-controls { margin-left: auto; display: flex; gap: 16px; padding-right: 9px; }
.win-controls button, .doc-controls button { width: 8px; height: 8px; }
.win-controls svg, .doc-controls svg { width: 8px; height: 8px; fill: none; stroke: #444; }
.menubar { height: 10px; padding-left: 3px; }
.menu-icon { width: 8px; height: 8px; margin-right: 4px; }
.menubar > button { margin-right: 7px; }
.doc-controls { margin-left: auto; display: flex; gap: 2px; padding-right: 1px; }
.doc-controls button { background: #fff; outline: 1px solid #efeeee; }

/* Toolbars */
.toolbar {
  height: 20px;
  display: flex;
  align-items: stretch;
  background: #efeeed;
  border-top: 1px solid #c3c3c3;
}
.toolbar.second { border-top-color: #d6d6d6; border-bottom: 1px solid #8f9093; }
.tool { flex: none; width: 18px; display: grid; place-items: center; }
.tool svg { width: 15px; height: 15px; }
.tool.on { background: #cbe6f8; }
.drop { flex: none; width: 8px; display: grid; place-items: center; }
.drop::before { content: ""; border: 2px solid transparent; border-top-color: #333; border-bottom: 0; }
.drop.off::before { border-top-color: #999; }
.sep { flex: none; width: 5px; margin: 1px 0; background: linear-gradient(90deg, transparent 2px, #b4b4b4 2px 3px, transparent 3px); }
.sep.tight { width: 1px; background: #c6c6c6; }
.method {
  flex: none;
  width: 110px;
  margin: 1px;
  padding-left: 3px;
  border: 1px solid #cacaca;
  appearance: none;
  font-weight: 600;
  background: #fff url("data:image/svg+xml,%3Csvg xmlns='http://www.w3.org/2000/svg' viewBox='0 0 6 6'%3E%3Cpath d='M1 2l2 2 2-2' fill='none' stroke='%23777'/%3E%3C/svg%3E") no-repeat right 2px center / 6px 6px;
}

/* Side panel */
.body { flex: 1; min-height: 0; display: flex; }
.side {
  flex: none;
  width: 143px;
  padding: 1px 4px 3px 1px;
  display: flex;
  flex-direction: column;
  border-bottom: 1px solid #aaa;
  font: 6px/8px "DejaVu Sans Condensed", "DejaVu Sans", sans-serif;
}
.side h2 {
  margin: 0;
  height: 9px;
  background: linear-gradient(90deg, #9fdcf6, #cfeefb 15%, #c4e9f9);
  border: 1px solid #a9daee;
  display: flex;
  align-items: center;
  font: inherit;
  font-weight: 700;
  padding-left: 13px;
}
.side h2::before { content: ""; margin-left: -9px; margin-right: auto; border: 2px solid transparent; border-top-color: #4a92c0; border-bottom: 0; }
.side h2::after { content: ""; margin-left: auto; }
.tree {
  flex: 1;
  margin: 2px 0 6px 1px;
  padding: 1px 0 0 2px;
  background: #fff;
  border: 1px solid #a6a9ac;
  white-space: nowrap;
  font: 5px/8px "DejaVu Sans", sans-serif;
}
.tree div { display: flex; align-items: center; gap: 2px; height: 8px; }
.tree svg { width: 8px; height: 8px; }
.tree .group { padding-left: 2px; gap: 4px; }
.tree .group svg { width: 7px; height: 7px; margin-right: -1px; }
.tree .leaf { margin-left: 13px; border-left: 1px solid #ccc; }
.tree .leaf svg { margin-left: 5px; }
.tree .current { height: 9px; font: 700 6px/8px "DejaVu Sans Condensed", "DejaVu Sans", sans-serif; }
.box { flex: none; width: 5px; height: 5px; border: 1px solid #999; font: 5px/3px "DejaVu Sans", sans-serif; text-align: center; }
.wide {
  height: 12px;
  margin: 0 1px 2px 1px;
  flex: none;
  display: flex;
  align-items: center;
  background: #fcfcfc;
  border: 1px solid #dcdcdc;
  border-radius: 2px;
}
.wide svg { width: 9px; height: 9px; margin-left: 1px; }
.wide span { flex: 1; text-align: center; }
.apply { margin: 6px 1px 0; }
.opt-tabs { display: flex; align-items: center; gap: 5px; height: 11px; margin: 2px 0 0 1px; font: 5px/8px "DejaVu Sans", sans-serif; }
.opt-tabs button { padding: 0 1px; height: 10px; white-space: nowrap; }
.opt-tabs .active { background: #fafafa; padding-left: 3px; }
.props { height: 134px; flex: none; margin: 0 3px; display: flex; border-left: 1px solid #8a8a8a; border-top: 1px solid #8a8a8a; }
.prop-list { width: 123px; display: flex; flex-direction: column; background: #f0efee; }
.prop-list > div { flex: 1; display: flex; align-items: center; white-space: nowrap; min-height: 0; }
.cat { gap: 4px; padding-left: 1px; font-weight: 700; }
.prop { margin-left: 8px; background: #fdfdfd; border-bottom: 1px solid #ededed; }
.prop label { width: 83px; padding-left: 1px; overflow: hidden; }
.prop > span { flex: 1; padding-left: 3px; display: flex; align-items: center; gap: 2px; align-self: stretch; }
.prop b { margin-left: auto; padding-right: 3px; }
.prop.selected label { background: #1279d0; color: #fff; align-self: stretch; display: flex; }
.prop.selected label::after { content: ""; flex: 1; margin: 0 5px 3px 5px; border-bottom: 1px dotted #9ecbf0; }
.prop input { appearance: none; width: 7px; height: 7px; border: 1px solid #909090; border-radius: 1px; background: #fff; }
.prop input:checked { border-color: #0d63b0; background: #1769b8; display: grid; place-items: center; }
.prop input:checked::before { content: ""; width: 4px; height: 2px; border: solid #fff; border-width: 0 0 1px 1px; transform: rotate(-45deg); }
.swatch { width: 7px; height: 7px; border: 1px solid #7d7431; background: #fbe60c; }
.dim { color: #8a8a8a; }
.prop .hatch { background: repeating-linear-gradient(135deg, #fff 0 3px, #777 3px 4px); }
.scroll { flex: 1; padding: 8px 0 0 4px; }
.scroll i { display: block; width: 1px; height: 92px; background: #777; }

.splitter { width: 3px; flex: none; display: flex; flex-direction: column; align-items: center; justify-content: center; gap: 27px; }
.splitter i { width: 2px; height: 2px; background: #333; }

/* Drawing view */
.view { flex: 1; min-width: 0; display: flex; flex-direction: column; }
.plot { flex: 1; min-height: 0; width: 100%; background: #fefdfc; border-left: 1px solid #77797c; }
.outline { fill: none; stroke: #66696b; stroke-width: 1.4; }
.dots path { fill: none; stroke: #d2c75b; stroke-dasharray: 1 1; }
.rays path { fill: none; stroke: #72b869; stroke-width: 1; }
.slips path { fill: none; stroke: #2c9428; stroke-width: 1; stroke-dasharray: 4 1; }
.labels rect { fill: #fff; stroke: #4b4b4b; }
.labels text { font: 7px "DejaVu Sans", sans-serif; fill: #35a135; text-anchor: middle; }
.labels .min { font-weight: 700; fill: #158c15; }
.mark { font: 21px "Liberation Sans", sans-serif; fill: #fb1528; }
.tick { stroke: #5c5c5c; fill: none; }
.ruler-text { font: 6px "Liberation Sans", sans-serif; fill: #333; text-anchor: middle; }
.node { fill: #fff; stroke: #555; stroke-width: 1; }

.strip { height: 17px; flex: none; display: flex; justify-content: flex-end; padding: 2px 33px 4px 0; }
.strip span { width: 70px; border: 1px solid #444; background: #fff; }
.view-tabs { height: 12px; flex: none; display: flex; border-bottom: 1px solid #bdbdbd; font: 5px/8px "DejaVu Sans", sans-serif; }
.view-tabs button { width: 155px; display: flex; align-items: center; gap: 3px; padding-left: 2px; white-space: nowrap; border-right: 1px solid #ddd; }
.view-tabs button:first-child { width: 160px; }
.view-tabs svg { width: 8px; height: 8px; }
.view-tabs .active { background: #fbfafa; width: 147px; }
.status { height: 11px; flex: none; display: flex; align-items: center; padding-left: 1px; border-bottom: 1px solid #ddd; }
.status b { font-weight: 700; }
.modes { margin-left: auto; padding-right: 84px; display: flex; gap: 5px; color: #888; }
.modes b { color: #2b2b2b; }

/* Taskbar */
.taskbar {
  height: 23px;
  flex: none;
  display: flex;
  align-items: center;
  background: linear-gradient(90deg, #f3e0d3, #f0e4c0 14%, #e9efb4 27%, #e8efb3 48%, #ece4c0 57%, #e0e5cf 68%, #dfe4e2);
}
.weather { width: 193px; padding-left: 10px; display: flex; align-items: center; gap: 5px; }
.weather svg { width: 11px; height: 11px; }
.weather span, .lang span, .clock span { display: block; }
.muted { color: #777; }
.apps { display: flex; }
.apps button { width: 23px; height: 21px; display: grid; place-items: center; position: relative; }
.apps svg { width: 15px; height: 15px; }
.apps .lit { background: #f4f2ea; border-radius: 2px; }
.apps .open::after { content: ""; position: absolute; bottom: 0; left: 10px; width: 3px; height: 1px; background: #555; }
.apps .front::after { left: 7px; width: 9px; height: 2px; background: #1273c9; }
.tray { margin-left: auto; padding-right: 10px; display: flex; align-items: center; gap: 4px; }
.tray svg { width: 9px; height: 9px; fill: none; stroke: #444; }
.tray .solid { fill: #333; stroke: none; }
.tray .mic { stroke: #2a78b8; margin-left: 3px; }
.lang { text-align: center; margin: 0 5px; }
.clock { text-align: right; margin-left: 3px; }
```

FILE: plot.js
```js
const NS = "http://www.w3.org/2000/svg";
const ruler = document.getElementById("ruler");
const nodes = document.getElementById("nodes");

function add(parent, name, attrs, text) {
  const el = document.createElementNS(NS, name);
  for (const key in attrs) el.setAttribute(key, attrs[key]);
  if (text !== undefined) el.textContent = text;
  parent.appendChild(el);
}

// Model units to drawing units
const toX = v => 236.5 + v * 0.8225;
const toY = v => 88 + (1400 - v) * 0.825;

// Long ticks every 50 units, short ones every 5
const tickLength = v => (v % 50 === 0 ? 4 : v % 25 === 0 ? 3 : 2);

let d = "M157.500 61V375.500H799";
for (let v = -95; v <= 680; v += 5) {
  d += `M${toX(v)} 375v${tickLength(v)}`;
  if (v % 50 === 0 && v >= -50) add(ruler, "text", { class: "ruler-text", x: toX(v), y: 383 }, v);
}
for (let v = 1055; v <= 1430; v += 5) {
  d += `M157 ${toY(v)}h-${tickLength(v)}`;
  if (v % 50 === 0 && v >= 1100) {
    add(ruler, "text", { class: "ruler-text", transform: `translate(153 ${toY(v)}) rotate(-90)` }, v);
  }
}
add(ruler, "path", { class: "tick", d });

const vertices = [
  [208.5, 324.5], [225.5, 324.5], [246, 321], [260.5, 321], [272, 317.5], [283.5, 317.5], [294, 317.5],
  [310, 310.5], [342, 294], [350, 291], [367, 282], [387, 275], [411, 266.5], [432, 256.5], [456, 256.5],
  [509, 256.5], [577, 260.5], [653, 263], [745, 263.5], [745, 287.5], [745, 360], [208.5, 360]
];
for (const [cx, cy] of vertices) add(nodes, "circle", { class: "node", cx, cy, r: 1.2 });
```
